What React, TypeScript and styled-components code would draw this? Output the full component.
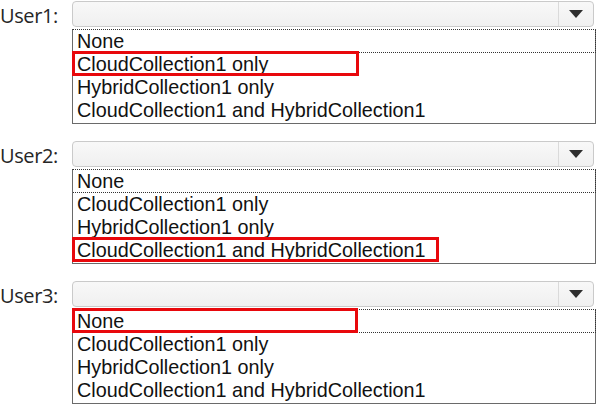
import React, { FC } from 'react';
import styled, { createGlobalStyle } from 'styled-components';

const GlobalStyle = createGlobalStyle`
  html, body {
    margin: 0;
    padding: 0;
    background: #ffffff;
  }
  * {
    box-sizing: border-box;
  }
`;

const Page = styled.div`
  width: 597px;
  height: 405px;
  overflow: hidden;
  padding-top: 1px;
  display: flex;
  flex-direction: column;
  gap: 17px;
`;

const Group = styled.div`
  display: grid;
  grid-template-columns: 72px 524px;
  grid-template-rows: 26px auto;
  row-gap: 2px;
`;

const Label = styled.div`
  font-family: 'Open Sans', 'Noto Sans', sans-serif;
  font-size: 20px;
  color: #262626;
  line-height: 26px;
  padding-top: 2px;
  letter-spacing: -0.4px;
`;

const Select = styled.div`
  width: 522px;
  height: 26px;
  border: 1px solid #cacaca;
  border-radius: 4px;
  background: linear-gradient(180deg, #f8f8f8 0%, #f0f0f0 100%);
  display: flex;
  justify-content: flex-end;
`;

const ArrowButton = styled.div`
  width: 35px;
  height: 100%;
  border-left: 1px solid #dadada;
  display: flex;
  align-items: center;
  justify-content: center;
`;

const ListBox = styled.div`
  grid-column: 2;
  border: 1px solid #6a6a6a;
  border-top: 1px dotted #333;
  padding-bottom: 1px;
  background: #fff;
`;

const Row = styled.div<{ $focused?: boolean }>`
  position: relative;
  height: 23px;
  line-height: 23px;
  padding-left: 4px;
  font-family: 'Liberation Sans', Arial, sans-serif;
  font-size: 19.8px;
  color: #111;
  white-space: nowrap;
  border-bottom: ${(p) => (p.$focused ? '1px dotted #333' : 'none')};
  border-right: ${(p) => (p.$focused ? '1px dotted #333' : 'none')};
  margin-right: ${(p) => (p.$focused ? '-1px' : '0')};
`;

const Mark = styled.span<{ $width: number }>`
  position: absolute;
  left: -1px;
  top: -2px;
  height: 25px;
  width: ${(p) => p.$width}px;
  border: 3px solid #e8080c;
  pointer-events: none;
`;

const options = [
  'None',
  'CloudCollection1 only',
  'HybridCollection1 only',
  'CloudCollection1 and HybridCollection1',
];

const users = [
  { name: 'User1:', marked: 1, width: 287 },
  { name: 'User2:', marked: 3, width: 367 },
  { name: 'User3:', marked: 0, width: 286 },
];

const Arrow: FC = () => (
  <svg width="14" height="8" viewBox="0 0 14 8">
    <path d="M0 0 L14 0 L7 8 Z" fill="#2e2e2e" />
  </svg>
);

const App: FC = () => {
  return (
    <Page>
      <GlobalStyle />
      {users.map((u) => (
        <Group key={u.name}>
          <Label>{u.name}</Label>
          <Select>
            <ArrowButton>
              <Arrow />
            </ArrowButton>
          </Select>
          <ListBox>
            {options.map((o, i) => (
              <Row key={o} $focused={i === 0}>
                {o}
                {i === u.marked && <Mark $width={u.width} />}
              </Row>
            ))}
          </ListBox>
        </Group>
      ))}
    </Page>
  );
};

export default App;
